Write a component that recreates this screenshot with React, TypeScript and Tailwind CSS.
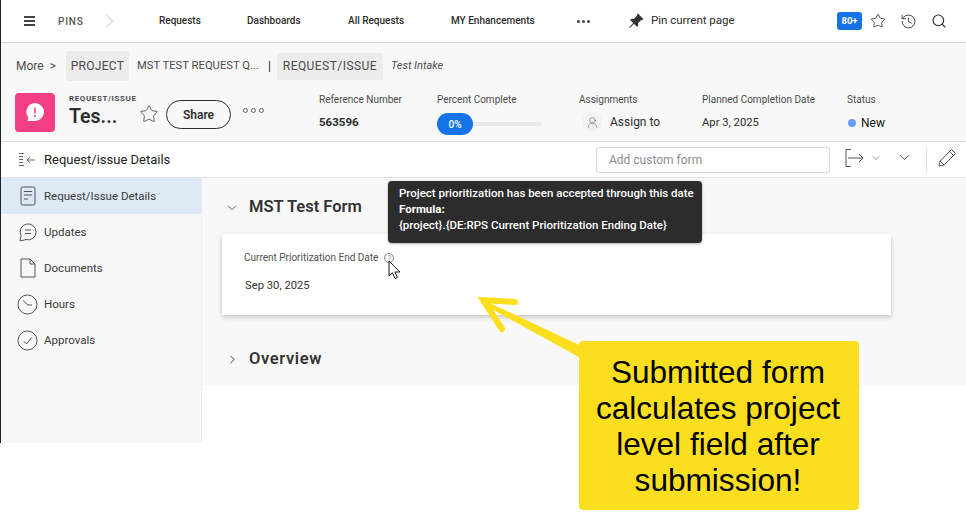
import React from 'react';
import { ChevronDown, ChevronRight, History, Search, Star, UserRound } from 'lucide-react';
import { BsPinAngleFill } from 'react-icons/bs';

const topLinks = [
  { label: 'Requests', className: 'ml-[45px] w-[41px]' },
  { label: 'Dashboards', className: 'ml-[47px] w-[54px]' },
  { label: 'All Requests', className: 'ml-[47px] w-[56px]' },
  { label: 'MY Enhancements', className: 'ml-[47px] w-[84px]' },
];

const DocIcon = () => (
  <svg width="16" height="20" viewBox="0 0 16 20" fill="none" stroke="#555" strokeWidth="1">
    <rect x="1" y="1" width="14" height="18" rx="1.5" />
    <path d="M4 5.5h8M4 9h8M4 13h4" />
  </svg>
);

const ChatIcon = () => (
  <svg width="20" height="20" viewBox="0 0 20 20" fill="none" stroke="#555" strokeWidth="1">
    <path d="M2 19l1-5.5A8 8 0 1 1 8 17.6c-2 .4-4 .9-6 1.4z" />
    <path d="M7 8h6M7 11.5h6" />
  </svg>
);

const PageIcon = () => (
  <svg width="16" height="20" viewBox="0 0 16 20" fill="none" stroke="#555" strokeWidth="1">
    <path d="M1 1h9l5 5v13H1z" />
    <path d="M10 1v5h5" />
  </svg>
);

const ClockIcon = () => (
  <svg width="21" height="21" viewBox="0 0 21 21" fill="none" stroke="#555" strokeWidth="1">
    <circle cx="10.5" cy="10.5" r="9.5" />
    <path d="M6 6.5l5 4.5h4" />
  </svg>
);

const CheckIcon = () => (
  <svg width="21" height="21" viewBox="0 0 21 21" fill="none" stroke="#555" strokeWidth="1">
    <circle cx="10.5" cy="10.5" r="9.5" />
    <path d="M6.5 11l3 3 5-6.5" />
  </svg>
);

const sideItems = [
  { label: 'Request/Issue Details', icon: <DocIcon />, active: true },
  { label: 'Updates', icon: <ChatIcon /> },
  { label: 'Documents', icon: <PageIcon /> },
  { label: 'Hours', icon: <ClockIcon /> },
  { label: 'Approvals', icon: <CheckIcon /> },
];

const MetaLabel = ({ children }: { children: React.ReactNode }) => (
  <div className="text-[10px] leading-[14px] text-[#4b4b4b] whitespace-nowrap">{children}</div>
);

export default function App() {
  return (
    <div className="relative w-[966px] h-[512px] overflow-hidden bg-white font-['Roboto',sans-serif] text-[#2c2c2c]">
      <div className="h-[443px] border-l border-l-[#222] flex flex-col">
        {/* top nav */}
        <div className="h-[43px] shrink-0 flex items-center border-b border-[#d5d5d5] bg-white text-[10px] font-medium">
          <div className="ml-[23px] w-[11px] flex flex-col gap-[2px]">
            <span className="h-[2px] bg-[#444]" />
            <span className="h-[2px] bg-[#444]" />
            <span className="h-[2px] bg-[#444]" />
          </div>
          <span className="ml-[23px] w-[27px] text-[10px] tracking-[0.8px] text-[#555]">PINS</span>
          <svg className="ml-[20px]" width="9" height="14" viewBox="0 0 9 14" fill="none" stroke="#dddddd" strokeWidth="1.25">
            <path d="M1 1l7 6-7 6" />
          </svg>
          {topLinks.map((l) => (
            <span key={l.label} className={`${l.className} whitespace-nowrap pb-[1px]`}>
              {l.label}
            </span>
          ))}
          <span className="ml-[42px] flex gap-[2px]">
            <span className="w-[3px] h-[3px] rounded-full bg-[#444]" />
            <span className="w-[3px] h-[3px] rounded-full bg-[#444]" />
            <span className="w-[3px] h-[3px] rounded-full bg-[#444]" />
          </span>
          <BsPinAngleFill className="ml-[38px] text-[#333]" size={16} />
          <span className="ml-[7px] w-[83px] text-[11.5px] font-normal whitespace-nowrap">Pin current page</span>
          <span className="ml-[103px] w-[25px] h-[18px] rounded-[3px] bg-[#1473e6] text-white text-[9.5px] font-bold flex items-center justify-center">
            80+
          </span>
          <Star className="ml-[8px] text-[#333]" size={16} strokeWidth={1.25} />
          <History className="ml-[14px] text-[#333]" size={17} strokeWidth={1.25} />
          <Search className="ml-[14px] text-[#333]" size={16} strokeWidth={1.75} />
        </div>

        {/* object header */}
        <div className="h-[99px] shrink-0 bg-[#f8f8f8] border-b border-[#dcdcdc] flex flex-col">
          <div className="h-[50px] pb-[4px] flex items-center text-[#4b4b4b] text-[12px]">
            <span className="ml-[15px]">More</span>
            <span className="ml-[6px]">&gt;</span>
            <span className="ml-[10px] h-[30px] w-[63px] rounded-[3px] bg-[#ececec] flex items-center justify-center tracking-[0.3px]">
              PROJECT
            </span>
            <span className="ml-2 w-[122px] whitespace-nowrap text-[11.25px]">MST TEST REQUEST Q...</span>
            <span className="ml-[9px] w-[3px] text-[#222]">|</span>
            <span className="ml-[6px] h-[27px] w-[106px] rounded-[3px] bg-[#ececec] flex items-center justify-center tracking-[0.45px]">
              REQUEST/ISSUE
            </span>
            <span className="ml-2 italic text-[11px]">Test Intake</span>
          </div>
          <div className="flex items-start h-[48px]">
            <div className="ml-[14px] w-10 h-[39px] rounded-[4px] bg-[#f33f83] flex items-center justify-center">
              <svg width="22" height="22" viewBox="0 0 22 22">
                <path d="M11 1a9 9 0 0 1 0 18H3.5l.8-3.5A9 9 0 0 1 11 1z" fill="#fff" />
                <path d="M11 5.5v6" stroke="#f33f83" strokeWidth="1.6" />
                <circle cx="11" cy="14" r="1" fill="#f33f83" />
              </svg>
            </div>
            <div className="ml-[14px] w-[70px]">
              <div className="text-[8px] leading-[12px] font-bold tracking-[0.6px] text-[#4b4b4b] whitespace-nowrap">
                REQUEST/ISSUE
              </div>
              <div className="text-[19.5px] leading-[24px] font-semibold">Tes...</div>
            </div>
            <Star className="mt-[11px] text-[#444]" size={20} strokeWidth={1} />
            <button className="ml-[7px] mt-[7px] w-[65px] h-[29px] rounded-full border border-[#2c2c2c] text-[12px] font-semibold">
              Share
            </button>
            <div className="ml-3 mt-[15px] flex gap-[3px]">
              <span className="w-[5px] h-[5px] rounded-full border border-[#666]" />
              <span className="w-[5px] h-[5px] rounded-full border border-[#666]" />
              <span className="w-[5px] h-[5px] rounded-full border border-[#666]" />
            </div>
            <div className="ml-[55px] w-[118px]">
              <MetaLabel>Reference Number</MetaLabel>
              <div className="mt-[7px] text-[11.5px] font-bold leading-[16px]">563596</div>
            </div>
            <div className="w-[142px]">
              <MetaLabel>Percent Complete</MetaLabel>
              <div className="mt-[6px] flex items-center">
                <span className="w-9 h-[22px] rounded-full bg-[#1473e6] text-white text-[10px] font-medium flex items-center justify-center">
                  0%
                </span>
                <span className="w-[69px] h-1 bg-[#e9e9e9] rounded-r-full" />
              </div>
            </div>
            <div className="w-[123px]">
              <MetaLabel>Assignments</MetaLabel>
              <div className="mt-[5px] flex items-center text-[12px]">
                <span className="ml-[3px] w-[20px] h-[20px] rounded-full bg-[#f1f1f1] flex items-center justify-center">
                  <UserRound className="text-[#777]" size={13} strokeWidth={1.25} />
                </span>
                <span className="ml-[8px]">Assign to</span>
              </div>
            </div>
            <div className="w-[145px]">
              <MetaLabel>Planned Completion Date</MetaLabel>
              <div className="mt-[8px] text-[11.25px] leading-[16px]">Apr 3, 2025</div>
            </div>
            <div>
              <MetaLabel>Status</MetaLabel>
              <div className="mt-[8px] flex items-center text-[12px] leading-[16px] text-[#111]">
                <span className="ml-[1px] w-2 h-2 rounded-full bg-[#6d9cf8]" />
                <span className="ml-[5px]">New</span>
              </div>
            </div>
          </div>
        </div>

        {/* details toolbar */}
        <div className="h-[36px] shrink-0 bg-white border-b border-[#e3e3e3] flex items-center">
          <svg className="ml-[17px]" width="18" height="16" viewBox="0 0 18 16" fill="none" stroke="#666" strokeWidth="1">
            <path d="M1 1.5h5M1 4.5h4M1 7.5h4M1 10.5h4M1 13.5h5" />
            <path d="M17 8H9M12 5L9 8l3 3" />
          </svg>
          <span className="ml-[8px] w-[552px] text-[13px] text-[#222]">Request/issue Details</span>
          <div className="w-[234px] h-[26px] rounded-[3px] border border-[#d5d5d5] px-3 flex items-center text-[12px] text-[#8e8e8e]">
            Add custom form
          </div>
          <svg className="ml-[15px] mb-[4px]" width="19" height="20" viewBox="0 0 19 20" fill="none" stroke="#555" strokeWidth="1">
            <path d="M6 1.5H1v17h5" />
            <path d="M3 10h15M14 6l4 4-4 4" />
          </svg>
          <ChevronDown className="ml-[6px] mb-[4px] text-[#555]" size={12} strokeWidth={1.25} />
          <ChevronDown className="ml-[14px] mb-[4px] text-[#444]" size={17} strokeWidth={1.25} />
          <span className="ml-[13px] w-px h-[26px] bg-[#e3e3e3]" />
          <svg className="ml-[11px] mb-[4px]" width="19" height="19" viewBox="0 0 19 19" fill="none" stroke="#555" strokeWidth="1">
            <path d="M1 18l1.2-5L13.5 1.5 17.5 5.5 6 17z" />
            <path d="M2.2 13L6 17M11.5 3.5l4 4" />
          </svg>
        </div>

        <div className="flex-1 flex min-h-0">
          {/* side nav */}
          <nav className="w-[201px] shrink-0 bg-[#f8f8f8] border-r border-[#eeeeee] text-[11.5px] text-[#3a3a3a]">
            {sideItems.map((item) => (
              <div
                key={item.label}
                className={`h-9 flex items-center ${item.active ? 'bg-[#dfe8f5]' : ''}`}
              >
                <span className="ml-[16px] w-[21px] flex justify-center">{item.icon}</span>
                <span className="ml-[6px] pt-[2px]">{item.label}</span>
              </div>
            ))}
          </nav>

          <main className="flex-1 flex flex-col">
            <div className="h-[207px] bg-[#f8f8f8] pl-[20px] pr-[75px]">
              <div className="h-[56px] flex items-center pt-[3px]">
                <ChevronDown className="ml-[3px] text-[#444]" size={14} strokeWidth={1.5} />
                <span className="ml-[10px] text-[16.5px] font-semibold text-[#333]">MST Test Form</span>
              </div>
              <div className="h-[81px] bg-white shadow-[0_2px_5px_rgba(0,0,0,0.22)] pl-[22px] pt-[17px]">
                <div className="flex items-center text-[10px] leading-[14px] text-[#505050]">
                  Current Prioritization End Date
                  <span className="ml-[6px] w-[10px] h-[10px] rounded-full border border-[#888] text-[7px] leading-none text-[#888] flex items-center justify-center">
                    ?
                  </span>
                </div>
                <div className="mt-[13px] ml-[1px] text-[11.25px] leading-[16px] text-[#333]">Sep 30, 2025</div>
              </div>
              <div className="mt-[26px] h-[36px] flex items-center">
                <ChevronRight className="ml-[4px] text-[#333]" size={13} strokeWidth={1.75} />
                <span className="ml-[10px] text-[16.5px] tracking-[0.6px] font-semibold text-[#333]">Overview</span>
              </div>
            </div>
          </main>
        </div>
      </div>

      {/* tooltip */}
      <div className="absolute left-[388px] top-[181px] w-[314px] h-[62px] rounded-[4px] bg-[#2c2c2c] shadow-[0_1px_3px_rgba(0,0,0,0.3)] pl-[11px] pt-[4px] text-[11.5px] leading-[16px] font-medium text-white whitespace-nowrap">
        <div>Project prioritization has been accepted through this date</div>
        <div className="font-bold">Formula:</div>
        <div>{'{project}.{DE:RPS Current Prioritization Ending Date}'}</div>
      </div>

      {/* mouse pointer */}
      <svg className="absolute left-[388px] top-[260px]" width="13" height="20" viewBox="0 0 13 20">
        <path d="M1 1v15l3.5-3.2L7 18.5l2.4-1-2.5-5.5h5z" fill="#fff" stroke="#111" strokeWidth="1" />
      </svg>

      {/* annotation arrow */}
      <svg className="absolute left-[475px] top-[295px]" width="115" height="70" viewBox="0 0 115 70" fill="none" stroke="#fbdf1e" strokeLinecap="round">
        <polygon points="8.9,5.2 7.1,8.8 105.5,62.9 110.5,53.1" fill="#fbdf1e" stroke="none" />
        <path d="M40 7L8 5L27 34" strokeWidth="6" />
      </svg>

      {/* callout */}
      <div className="absolute left-[579px] top-[341px] w-[280px] h-[169px] rounded-[4px] bg-[#fbdf1e] pt-[13px] pr-[2px] text-center text-[31.6px] leading-[36px] text-black font-['Liberation_Sans',sans-serif]">
        Submitted form
        <br />
        calculates project
        <br />
        level field after
        <br />
        submission!
      </div>
    </div>
  );
}
